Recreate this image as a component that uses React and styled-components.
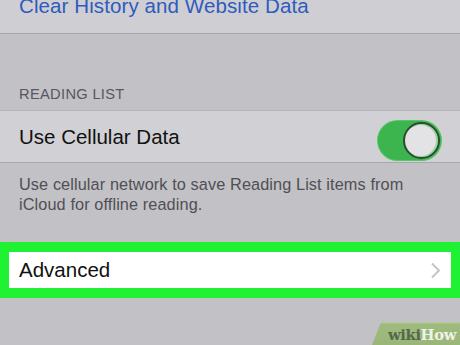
import React from "react";
import styled, { createGlobalStyle } from "styled-components";

const Global = createGlobalStyle`
  html, body { margin: 0; padding: 0; background: #c2c1c6; }
  body { width: 460px; height: 345px; overflow: hidden; font-family: "Liberation Sans", Arial, sans-serif; }
`;

const Page = styled.div`
  position: relative;
  width: 460px;
  height: 345px;
  overflow: hidden;
  background: #c2c1c6;
  display: flex;
  flex-direction: column;
`;

const Row = styled.div`
  display: flex;
  align-items: ${(p) => p.$align || "center"};
  justify-content: space-between;
  height: ${(p) => p.$h}px;
  padding: 0 19px 0 19px;
  background: ${(p) => p.$bg || "#d0cfd3"};
  border-bottom: ${(p) => (p.$bottom ? "1.5px solid #a8a7ac" : "none")};
  border-top: ${(p) => (p.$top ? "1.5px solid #b3b2b6" : "none")};
  overflow: hidden;
  box-sizing: border-box;
`;

const LinkText = styled.span`
  color: #2e5bbd;
  font-size: 20.5px;
  line-height: 24px;
  margin-top: -6px;
  letter-spacing: 0.1px;
`;

const Label = styled.span`
  color: #111;
  font-size: 20.5px;
  line-height: 24px;
`;

const SectionHeader = styled.div`
  padding: 0 19px;
  margin-top: ${(p) => p.$mt}px;
  height: ${(p) => p.$h}px;
  color: #58575c;
  font-size: 14.7px;
  line-height: 18px;
  letter-spacing: 0.3px;
`;

const Footer = styled.div`
  padding: 11px 19px 0;
  height: 79px;
  box-sizing: border-box;
  color: #504f54;
  font-size: 16.3px;
  line-height: 20px;
  letter-spacing: 0.1px;
`;

const Toggle = styled.div`
  width: 63px;
  height: 39px;
  border-radius: 20px;
  background: #3db54f;
  box-shadow: 0 0 0 1px #58c466;
  display: flex;
  justify-content: flex-end;
  align-items: center;
  padding: 1px;
  box-sizing: border-box;
  margin-top: 7px;
`;

const Knob = styled.div`
  width: 37px;
  height: 37px;
  border-radius: 50%;
  background: #e3e2e4;
  box-sizing: border-box;
  border: 2px solid #2d4a33;
  box-shadow: -1px 0 0 1px #9ad7a2 inset;
`;

const Highlight = styled.div`
  background: #1ff232;
  padding: 10px 9px;
  display: flex;
`;

const AdvancedRow = styled.div`
  flex: 1;
  height: 36px;
  background: #ffffff;
  display: flex;
  align-items: center;
  justify-content: space-between;
  padding: 0 10px 0 10px;
`;

const Badge = styled.div`
  position: absolute;
  right: 0;
  bottom: 0;
  width: 88px;
  height: 23px;
  background: linear-gradient(#b3ca97 0, #b3ca97 1px, #9fba7e 2px, #9ab679 100%);
  clip-path: polygon(9px 0, 100% 0, 100% 100%, 0 100%);
  display: flex;
  align-items: center;
  justify-content: flex-end;
  padding: 1px 4px 0 0;
  box-sizing: border-box;
  font-family: "DejaVu Serif", "Liberation Serif", serif;
  font-weight: bold;
  font-size: 14.8px;
  letter-spacing: -0.4px;
`;

const Wiki = styled.span`
  color: #56684a;
`;
const How = styled.span`
  color: #eef3e8;
`;

const Chevron = () => (
  <svg width="11" height="17" viewBox="0 0 11 17">
    <path d="M2 1.5 L9 8.5 L2 15.5" fill="none" stroke="#c4c4c8" strokeWidth="2" />
  </svg>
);

export default function App() {
  return (
    <>
      <Global />
      <Page>
        <Row $h={34} $bg="#cfced2" $align="flex-start" $bottom>
          <LinkText>Clear History and Website Data</LinkText>
        </Row>
        <SectionHeader $mt={51} $h={25}>READING LIST</SectionHeader>
        <Row $h={53} $top $bottom $bg="#d1d0d4">
          <Label>Use Cellular Data</Label>
          <Toggle>
            <Knob />
          </Toggle>
        </Row>
        <Footer>
          Use cellular network to save Reading List items from
          <br />
          iCloud for offline reading.
        </Footer>
        <Highlight>
          <AdvancedRow>
            <Label>Advanced</Label>
            <Chevron />
          </AdvancedRow>
        </Highlight>
        <Badge>
          <Wiki>wiki</Wiki>
          <How>How</How>
        </Badge>
      </Page>
    </>
  );
}
